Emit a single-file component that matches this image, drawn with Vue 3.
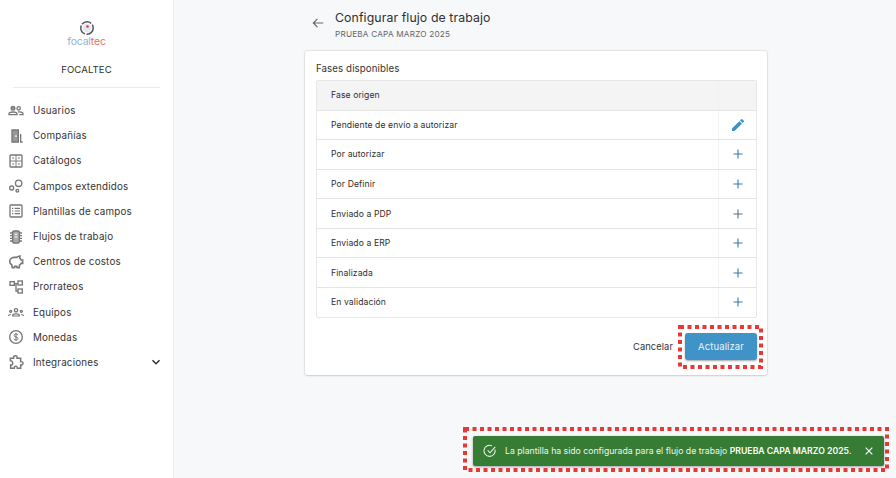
<script setup>
const menu = [
  { label: 'Usuarios', icon: 'users' },
  { label: 'Compañías', icon: 'door' },
  { label: 'Catálogos', icon: 'catalog' },
  { label: 'Campos extendidos', icon: 'bubbles' },
  { label: 'Plantillas de campos', icon: 'list' },
  { label: 'Flujos de trabajo', icon: 'chip' },
  { label: 'Centros de costos', icon: 'piggy' },
  { label: 'Prorrateos', icon: 'tree' },
  { label: 'Equipos', icon: 'team' },
  { label: 'Monedas', icon: 'coin' },
  { label: 'Integraciones', icon: 'puzzle', chevron: true }
]
const rows = [
  { name: 'Pendiente de envío a autorizar', edit: true },
  { name: 'Por autorizar' },
  { name: 'Por Definir' },
  { name: 'Enviado a PDP', gray: true },
  { name: 'Enviado a ERP' },
  { name: 'Finalizada' },
  { name: 'En validación' }
]
</script>

<template>
  <div class="page">
    <aside class="side">
      <div class="brand">
        <svg class="logo-mark" viewBox="0 0 16 16" width="16" height="16">
          <circle cx="8" cy="8" r="6.200" fill="none" stroke="#555" stroke-width="1.500" stroke-dasharray="10 1.500" />
          <circle cx="8" cy="8" r="4.400" fill="#dfe9f3" />
          <circle cx="8.500" cy="6.500" r="1.300" fill="#d9403a" />
        </svg>
        <div class="logo-text"><span class="lt-a">focal</span><span class="lt-b">tec</span></div>
        <div class="company">FOCALTEC</div>
      </div>
      <nav class="nav">
        <div v-for="m in menu" :key="m.label" class="nav-item">
          <svg class="nav-icon" viewBox="0 0 24 24" width="16" height="16" fill="none" stroke="#777" stroke-width="2">
            <template v-if="m.icon === 'users'">
              <circle cx="7.500" cy="8" r="2.800" fill="#999" /><circle cx="16" cy="8" r="2.500" />
              <path d="M1.500 17.500v-1.200c0-1.600 3-2.800 6-2.800s6 1.200 6 2.800v1.200zM15 13.500c3-.6 7.500.4 7.500 2.500v1.500H17" />
            </template>
            <template v-else-if="m.icon === 'door'">
              <path d="M6 21V3h9.500v18z" fill="#999" /><path d="M19 9v12h3" /><path d="M12 11v2.500" stroke="#fff" />
            </template>
            <template v-else-if="m.icon === 'catalog'">
              <rect x="3" y="3" width="18" height="18" rx="1.500" /><path d="M12 3v18M3 12h18" stroke-width="1.400" /><path d="M6 7.500h3M15 7.500h3M6 16.500h3M15 16.500h3" stroke-width="1.800" />
            </template>
            <template v-else-if="m.icon === 'bubbles'">
              <circle cx="16" cy="8" r="4.800" /><circle cx="5.500" cy="15" r="3" /><circle cx="14" cy="19" r="2" />
            </template>
            <template v-else-if="m.icon === 'list'">
              <rect x="3" y="3" width="18" height="18" rx="1.500" /><path d="M10 8h8M10 12h8M10 16h8M6 8h2M6 12h2M6 16h2" stroke-width="1.800" />
            </template>
            <template v-else-if="m.icon === 'chip'">
              <rect x="7" y="3" width="10" height="18" rx="2" fill="#aaa" /><path d="M3 6h4M3 10h4M3 14h4M3 18h4M17 6h4M17 10h4M17 14h4M17 18h4" /><path d="M10 8h4M10 12h4" stroke="#fff" stroke-width="1.500" />
            </template>
            <template v-else-if="m.icon === 'piggy'">
              <path d="M6.500 20.500l-1-4.500C3.500 15 2.500 13 2.500 11c0-4 4-6 7.500-6h3c1-1 3-2 5-2l-.6 3.200c1.200.8 2 1.800 2.400 2.800H22v5h-2.300c-.6 1-1.400 1.800-2.400 2.400l-.3 4.100h-3.500l-.4-2h-3l-.4 2z" stroke-width="2.400" />
            </template>
            <template v-else-if="m.icon === 'tree'">
              <rect x="3" y="4" width="6.500" height="5.500" /><rect x="15" y="3" width="6.500" height="6" /><rect x="15" y="15" width="6.500" height="6" /><path d="M9.500 7h5.500M12 7v11h3" />
            </template>
            <template v-else-if="m.icon === 'team'">
              <circle cx="12" cy="9.500" r="2.500" /><circle cx="4" cy="11" r="1.500" /><circle cx="20" cy="11" r="1.500" />
              <path d="M7 18v-.7c0-1.500 2.200-2.500 5-2.500s5 1 5 2.500v.7zM1 18v-.7c0-1 1-1.500 3-1.500M23 18v-.7c0-1-1-1.500-3-1.500" stroke-width="1.800" />
            </template>
            <template v-else-if="m.icon === 'coin'">
              <circle cx="12" cy="12" r="9.500" />
              <path d="M15 9.200c-.4-1.200-1.500-1.800-3-1.800-1.700 0-2.900.9-2.900 2.200 0 3.100 6 1.600 6 4.800 0 1.300-1.300 2.300-3.100 2.300-1.700 0-2.800-.8-3.100-2.100M12 5.800v12.400" stroke-width="1.500" />
            </template>
            <template v-else>
              <path d="M3.500 6.500h5c-.5-3 .5-4 2.500-4s3 1 2.500 4H19v5c2.500-.4 3.500 1 3.500 2.500S21 17 19 16.500v5h-5c.3-2-.7-3-2.200-3s-2.800 1-2.300 3H4v-5c2 .5 3-1 3-2.200S6 9.500 3.500 10z" stroke-width="2.200" />
            </template>
          </svg>
          <span class="nav-label">{{ m.label }}</span>
          <svg v-if="m.chevron" class="chev" viewBox="0 0 24 24" width="14" height="14" fill="none" stroke="#333" stroke-width="2.600">
            <path d="M6 9l6 6 6-6" />
          </svg>
        </div>
      </nav>
    </aside>

    <main class="main">
      <header class="head">
        <svg class="back" viewBox="0 0 24 24" width="14" height="14" fill="none" stroke="#666" stroke-width="2">
          <path d="M21 12H4M11 5l-7 7 7 7" />
        </svg>
        <div>
          <h1 class="title">Configurar flujo de trabajo</h1>
          <div class="subtitle">PRUEBA CAPA MARZO 2025</div>
        </div>
      </header>

      <section class="card">
        <h2 class="card-title">Fases disponibles</h2>
        <div class="table">
          <div class="row row-head">
            <div class="cell-name">Fase origen</div>
            <div class="cell-act"></div>
          </div>
          <div v-for="r in rows" :key="r.name" class="row">
            <div class="cell-name">{{ r.name }}</div>
            <div class="cell-act">
              <svg v-if="r.edit" viewBox="0 0 24 24" width="16" height="16" fill="#3d8fc4">
                <path d="M3 17.250V21h3.750L17.810 9.940l-3.750-3.750zM20.710 7.040a1 1 0 0 0 0-1.410l-2.340-2.340a1 1 0 0 0-1.410 0l-1.830 1.830 3.750 3.750z" />
              </svg>
              <svg v-else viewBox="0 0 12 12" width="12" height="12" fill="none" :stroke="r.gray ? '#5f6f7a' : '#2f7bb0'" stroke-width="1.100">
                <path d="M6 1.500v9M1.500 6h9" />
              </svg>
            </div>
          </div>
        </div>
        <div class="actions">
          <button class="btn-text" type="button">Cancelar</button>
          <div class="hl-wrap">
            <button class="btn-primary" type="button">Actualizar</button>
            <svg class="hl hl-btn" width="86" height="45" viewBox="0 0 86 45">
              <rect x="2" y="2" width="81" height="40" fill="none" stroke="#e53935" stroke-width="4" stroke-dasharray="4 3.500" />
            </svg>
          </div>
        </div>
      </section>
    </main>

    <div class="toast">
      <svg viewBox="0 0 24 24" width="14" height="14" fill="none" stroke="#eef5ee" stroke-width="1.800">
        <path d="M20.500 9.500A9.500 9.500 0 1 1 15.500 3.200" /><path d="M8 11l4 4 9-10" />
      </svg>
      <span class="toast-text">La plantilla ha sido configurada para el flujo de trabajo <b>PRUEBA CAPA MARZO 2025.</b></span>
      <svg class="toast-x" viewBox="0 0 12 12" width="10" height="10" fill="none" stroke="#fff" stroke-width="1.400">
        <path d="M2 2l8 8M10 2l-8 8" />
      </svg>
      <svg class="hl hl-toast" width="427" height="46" viewBox="0 0 427 46">
        <rect x="2" y="2" width="422" height="41" fill="none" stroke="#e53935" stroke-width="4" stroke-dasharray="4 3.500" />
      </svg>
    </div>
  </div>
</template>

<style>
html, body { margin: 0; background: #f7f8fa; }
</style>

<style scoped>
.page {
  position: relative;
  display: flex;
  width: 896px;
  height: 478px;
  overflow: hidden;
  background: #f7f8fa;
  font-family: Inter, "Liberation Sans", sans-serif;
  color: #2e2e2e;
}
.side {
  width: 174px;
  box-sizing: border-box;
  flex: none;
  background: #fff;
  border-right: 1px solid #eceef1;
}
.brand {
  display: flex;
  flex-direction: column;
  align-items: center;
  margin: 0 13px;
  padding-top: 20px;
  height: 67px;
  border-bottom: 1px solid #ebebeb;
}
.logo-mark { display: block; }
.logo-text { font-size: 10.500px; line-height: 11px; margin-top: 0; letter-spacing: -0.2px; }
.lt-a { color: #8fb2d4; }
.lt-b { color: #e8705f; }
.company { font-size: 9.600px; line-height: 12px; margin-top: 17px; letter-spacing: 0.1px; }
.nav { padding-top: 10px; }
.nav-item {
  display: flex;
  align-items: center;
  height: 25.200px;
  padding-left: 8px;
  padding-right: 10px;
  font-size: 9.800px;
}
.nav-icon { flex: none; }
.nav-label { margin-left: 9px; letter-spacing: 0.2px; color: #333; }
.chev { margin-left: auto; }
.main { flex: 1; min-width: 0; padding-left: 131px; }
.head {
  display: flex;
  height: 51px;
  box-sizing: border-box;
  padding: 10px 0 0 6px;
  gap: 10px;
}
.back { margin-top: 6px; }
.title { margin: 0; font-size: 12.300px; line-height: 16px; font-weight: 400; color: #303030; letter-spacing: 0.1px; }
.subtitle { font-size: 8.200px; line-height: 11px; margin-top: 3px; color: #666; letter-spacing: 0.2px; }
.card {
  width: 462px;
  height: 324px;
  box-sizing: border-box;
  background: #fff;
  border-radius: 2px;
  padding: 11px 10px 0 11px;
  box-shadow: 0 0 2px rgba(0,0,0,.25), 0 1px 2px rgba(0,0,0,.1);
}
.card-title { margin: 0; font-size: 9.700px; line-height: 13px; font-weight: 400; color: #333; letter-spacing: 0.1px; }
.table {
  margin-top: 5px;
  border: 1px solid #e6e6e6;
  border-radius: 2px;
}
.row {
  display: flex;
  height: 29.600px;
  box-sizing: border-box;
  border-top: 1px solid #e4e4e4;
  font-size: 8.600px;
}
.row:first-child { border-top: 0; }
.row-head { background: #f4f4f4; height: 28.500px; }
.cell-name { flex: 1; display: flex; align-items: center; padding-left: 14px; color: #2e2e2e; letter-spacing: 0.1px; }
.cell-act { width: 37px; border-left: 1px solid #f1f1f1; display: flex; align-items: center; justify-content: center; }
.actions {
  display: flex;
  justify-content: flex-end;
  align-items: center;
  margin-top: 15px;
}
.btn-text { border: 0; background: none; padding: 0; margin-right: 12px; font: inherit; font-size: 9.300px; color: #333; letter-spacing: 0.1px; }
.hl-wrap { position: relative; }
.btn-primary {
  display: block;
  width: 72px;
  height: 27px;
  border: 0;
  border-radius: 3px;
  background: #3f93c6;
  color: #e8f3fa;
  font: inherit;
  font-size: 9.500px;
  letter-spacing: 0.1px;
  box-shadow: 0 1px 2px rgba(0,0,0,.35);
}
.hl { position: absolute; pointer-events: none; }
.hl-btn { left: -7px; top: -8px; }
.toast {
  position: absolute;
  left: 473px;
  top: 436px;
  width: 411px;
  height: 30px;
  box-sizing: border-box;
  display: flex;
  align-items: center;
  padding-left: 10px;
  background: #367c34;
  border-radius: 2px;
  color: #f0f6f0;
  font-size: 8.700px;
  box-shadow: 0 1px 3px rgba(0,0,0,.35);
}
.toast-text { margin-left: 8px; white-space: nowrap; }
.toast-text b { font-weight: 600; color: #fff; }
.toast-x { position: absolute; right: 10px; top: 10px; }
.hl-toast { left: -10px; top: -9px; }
</style>
